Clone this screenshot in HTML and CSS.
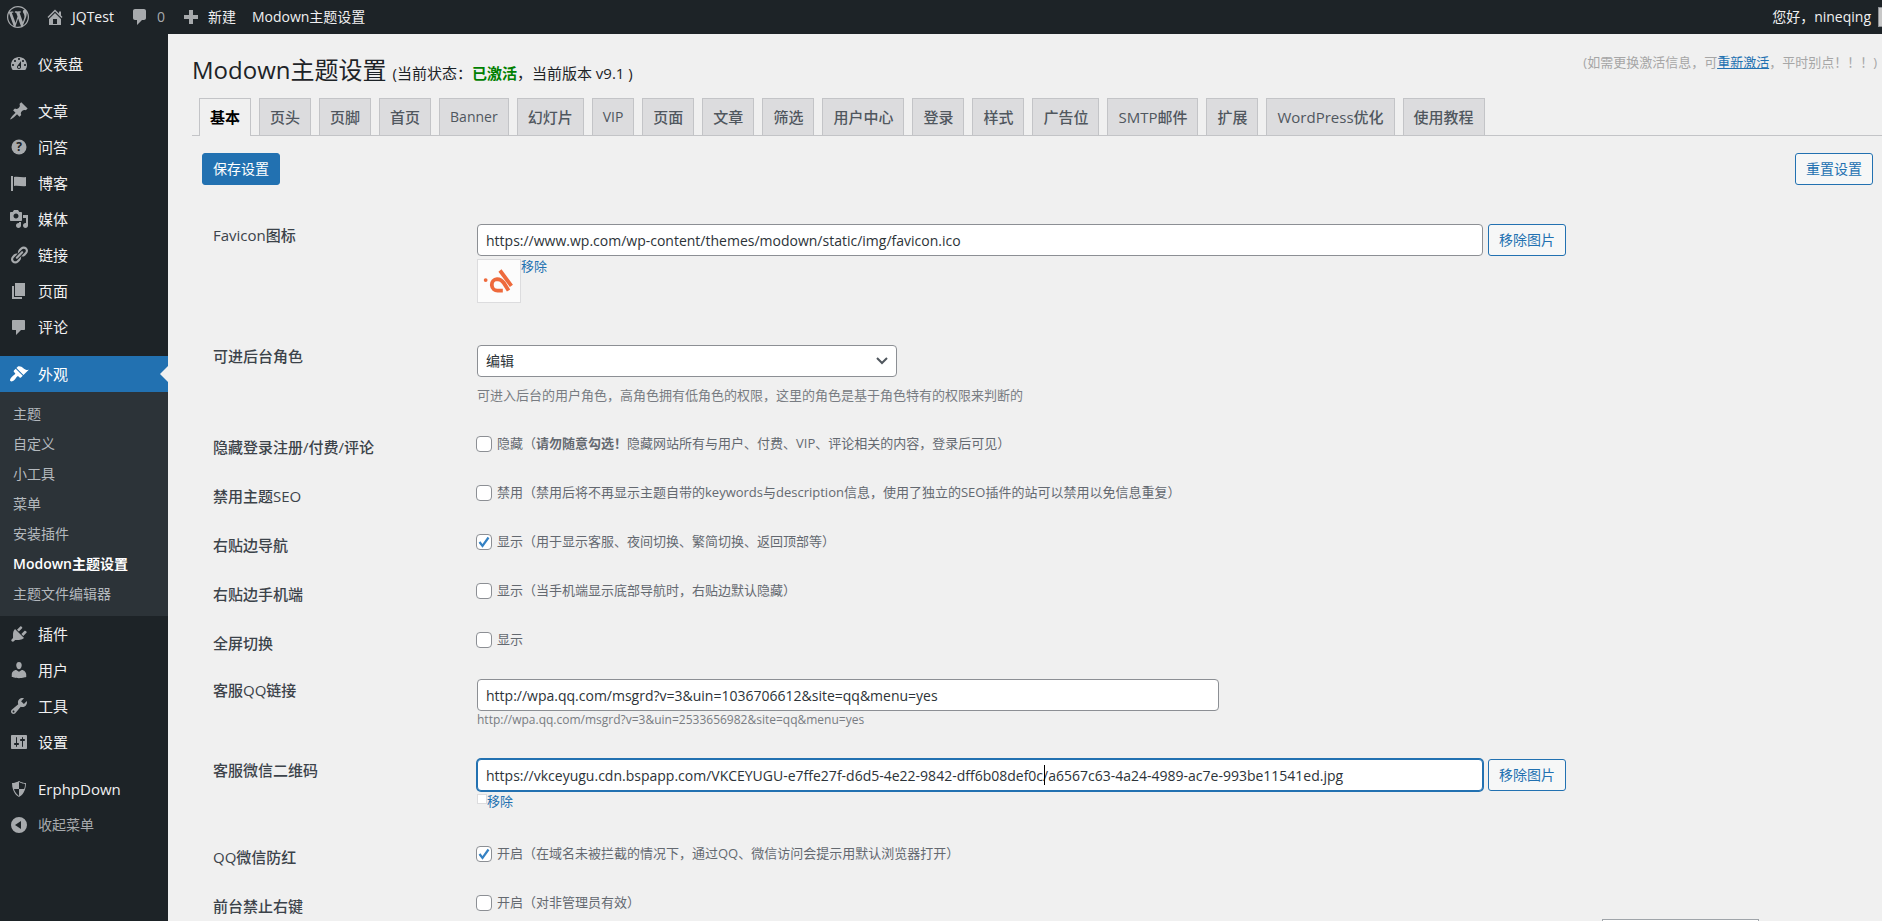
FILE: index.html
```html
<!DOCTYPE html>
<html lang="zh-CN">
<head>
<meta charset="utf-8">
<title>Modown主题设置</title>
<link rel="stylesheet" href="styles.css">
</head>
<body>
<header class="adminbar">
  <a class="bar-item bar-logo" href="#" aria-label="WordPress"><svg class="icon icon-wp" viewBox="0 0 20 20"><path d="M20 10c0-5.51-4.49-10-10-10C4.48 0 0 4.49 0 10c0 5.52 4.48 10 10 10 5.51 0 10-4.48 10-10zM7.78 15.37L4.37 6.22c.55-.02 1.17-.08 1.17-.08.5-.06.44-1.13-.06-1.11 0 0-1.45.11-2.37.11-.18 0-.37 0-.58-.01C4.12 2.69 6.87 1.11 10 1.11c2.33 0 4.45.87 6.05 2.34-.68-.11-1.65.39-1.65 1.58 0 .74.45 1.36.9 2.1.35.61.55 1.36.55 2.46 0 1.49-1.4 5-1.4 5l-3.03-8.37c.54-.02.82-.17.82-.17.5-.05.44-1.25-.06-1.22 0 0-1.44.12-2.38.12-.87 0-2.33-.12-2.33-.12-.5-.03-.56 1.2-.06 1.22l.92.08 1.26 3.41zM17.41 10c.24-.64.74-1.87.43-4.25.7 1.29 1.05 2.71 1.05 4.25 0 3.29-1.73 6.24-4.4 7.78.97-2.59 1.94-5.2 2.92-7.78zM6.1 18.09C3.12 16.65 1.11 13.53 1.11 10c0-1.3.23-2.48.72-3.59C3.25 10.3 4.67 14.2 6.1 18.09zm4.03-6.63l2.58 6.98c-.86.29-1.76.45-2.71.45-.79 0-1.57-.11-2.29-.33.81-2.38 1.62-4.74 2.42-7.1z"/></svg></a>
  <a class="bar-item bar-site" href="#"><svg class="icon" viewBox="0 0 20 20"><path fill-rule="evenodd" d="M16 8.5l1.53 1.53-1.06 1.06L10 4.6l-6.47 6.49-1.06-1.06L10 2.5l4 4v-2h2v4zm-6-2.46l6 5.99V18H4v-5.97zM12 17v-5H8v5h4z"/></svg>JQTest</a>
  <a class="bar-item bar-comments" href="#"><svg class="icon" viewBox="0 0 20 20"><path d="M5 2h9c1.1 0 2 .9 2 2v7c0 1.1-.9 2-2 2h-2l-5 5v-5H5c-1.1 0-2-.9-2-2V4c0-1.1.9-2 2-2z"/></svg>0</a>
  <a class="bar-item bar-new" href="#"><svg class="icon" viewBox="0 0 20 20"><path d="M8 3h4v5h5v4h-5v5H8v-5H3V8h5z"/></svg>新建</a>
  <a class="bar-item" href="#">Modown主题设置</a>
  <a class="bar-item bar-user" href="#">您好，nineqing<span class="avatar"></span></a>
</header>

<div class="layout">
  <nav class="sidebar" aria-label="主菜单">
    <ul class="menu">
      <li><a class="menu-link" href="#"><svg class="icon" viewBox="0 0 20 20"><path fill-rule="evenodd" d="M3.76 16h12.48c1.1-1.37 1.76-3.11 1.76-5 0-4.42-3.58-8-8-8s-8 3.58-8 8c0 1.89.66 3.63 1.76 5zM10 4c.55 0 1 .45 1 1s-.45 1-1 1-1-.45-1-1 .45-1 1-1zM6 6c.55 0 1 .45 1 1s-.45 1-1 1-1-.45-1-1 .45-1 1-1zm8 0c.55 0 1 .45 1 1s-.45 1-1 1-1-.45-1-1 .45-1 1-1zm-5.37 5.55L12 7v6c0 1.1-.9 2-2 2s-2-.9-2-2c0-.57.24-1.08.63-1.45zM4 10c.55 0 1 .45 1 1s-.45 1-1 1-1-.45-1-1 .45-1 1-1zm12 0c.55 0 1 .45 1 1s-.45 1-1 1-1-.45-1-1 .45-1 1-1zm-5 3c0-.55-.45-1-1-1s-1 .45-1 1 .45 1 1 1 1-.45 1-1z"/></svg>仪表盘</a></li>
    </ul>
    <ul class="menu">
      <li><a class="menu-link" href="#"><svg class="icon" viewBox="0 0 20 20"><path d="M10.44 3.02l1.82-1.82 6.36 6.35-1.83 1.82c-1.05-.68-2.48-.57-3.41.36l-.75.75c-.92.93-1.04 2.35-.35 3.41l-1.83 1.82-2.41-2.41-2.8 2.79c-.42.42-3.38 2.71-3.8 2.29s1.86-3.39 2.28-3.81l2.79-2.79L4.1 9.36l1.83-1.82c1.05.69 2.48.57 3.4-.36l.75-.75c.93-.92 1.05-2.35.36-3.41z"/></svg>文章</a></li>
      <li><a class="menu-link" href="#"><svg class="icon" viewBox="0 0 20 20"><circle cx="10" cy="10" r="7.5"/><text class="icon-mark" x="10" y="14" text-anchor="middle">?</text></svg>问答</a></li>
      <li><a class="menu-link" href="#"><svg class="icon" viewBox="0 0 20 20"><path d="M4 18V3H2v15h2zm1-5V4c4-1 8 1 12 0v9c-4 1-8-1-12 0z"/></svg>博客</a></li>
      <li><a class="menu-link" href="#"><svg class="icon" viewBox="0 0 20 20"><path fill-rule="evenodd" d="M13 11V4c0-.55-.45-1-1-1h-1.67L9 1H5L3.67 3H2c-.55 0-1 .45-1 1v7c0 .55.45 1 1 1h10c.55 0 1-.45 1-1zM7 4.5c1.38 0 2.5 1.12 2.5 2.5S8.38 9.5 7 9.5 4.5 8.38 4.5 7 5.62 4.5 7 4.5zM14 6h5v10.5c0 1.38-1.12 2.5-2.5 2.5S14 17.88 14 16.5s1.12-2.5 2.5-2.5c.17 0 .34.02.5.05V9h-3V6zm-4 8.05V13h2v3.5c0 1.38-1.12 2.5-2.5 2.5S7 17.88 7 16.5 8.12 14 9.5 14c.17 0 .34.02.5.05z"/></svg>媒体</a></li>
      <li><a class="menu-link" href="#"><svg class="icon" viewBox="0 0 20 20"><path d="M17.74 2.76c1.68 1.69 1.68 4.41 0 6.1l-1.53 1.52c-1.12 1.12-2.7 1.47-4.14 1.09l2.62-2.61.76-.77.76-.76c.84-.84.84-2.2 0-3.04-.84-.85-2.2-.85-3.04 0l-.77.76-3.38 3.38c-.37-1.44-.02-3.02 1.1-4.14l1.52-1.53c1.69-1.68 4.42-1.68 6.1 0zM8.59 13.43l5.34-5.34c.42-.42.42-1.1 0-1.52-.44-.43-1.13-.39-1.53 0l-5.33 5.34c-.42.42-.42 1.1 0 1.52.44.43 1.13.39 1.52 0zm-.76 2.29l4.14-4.15c.38 1.44.03 3.02-1.09 4.14l-1.52 1.53c-1.69 1.68-4.41 1.68-6.1 0-1.68-1.68-1.68-4.42 0-6.1l1.53-1.52c1.12-1.12 2.7-1.47 4.14-1.1l-4.14 4.15c-.85.84-.85 2.2 0 3.05.84.84 2.2.84 3.04 0z"/></svg>链接</a></li>
      <li><a class="menu-link" href="#"><svg class="icon" viewBox="0 0 20 20"><path d="M6 15V2h10v13H6zm-1 1h8v2H3V5h2v11z"/></svg>页面</a></li>
      <li><a class="menu-link" href="#"><svg class="icon" viewBox="0 0 20 20"><path d="M4 3h11c.6 0 1 .4 1 1v8c0 .6-.4 1-1 1h-3l-5 5v-5H4c-.6 0-1-.4-1-1V4c0-.6.4-1 1-1z"/></svg>评论</a></li>
    </ul>
    <ul class="menu">
      <li>
        <a class="menu-link menu-current" href="#"><svg class="icon" viewBox="0 0 20 20"><path d="M14.48 11.06L7.41 3.99l1.5-1.5c.5-.56 2.3-.47 3.51.32 1.21.8 1.43 1.28 2.91 2.1 1.18.64 2.45 1.26 4.45.85zm-.71.71L6.7 4.7 4.93 6.47c-.39.39-.39 1.02 0 1.41l1.06 1.06c.39.39.39 1.03 0 1.42-.6.6-1.43 1.11-2.21 1.69-.35.26-.7.53-1.01.84C1.43 14.23.4 16.08 1.4 17.07c.99 1 2.84-.03 4.18-1.36.31-.31.58-.66.85-1.02.57-.78 1.08-1.61 1.69-2.21.39-.39 1.02-.39 1.41 0l1.06 1.06c.39.39 1.02.39 1.41 0z"/></svg>外观</a>
        <ul class="submenu">
          <li><a href="#">主题</a></li>
          <li><a href="#">自定义</a></li>
          <li><a href="#">小工具</a></li>
          <li><a href="#">菜单</a></li>
          <li><a href="#">安装插件</a></li>
          <li><a class="submenu-current" href="#">Modown主题设置</a></li>
          <li><a href="#">主题文件编辑器</a></li>
        </ul>
      </li>
      <li><a class="menu-link" href="#"><svg class="icon" viewBox="0 0 20 20"><path d="M13.11 4.36L9.87 7.6 8 5.73l3.24-3.24c.35-.34 1.05-.2 1.56.32.52.51.66 1.21.31 1.55zm-8 1.77l.91-1.12 9.01 9.01-1.19.84c-.71.71-2.63 1.16-3.82 1.16H6.14L4.9 17.26c-.59.59-1.54.59-2.12 0-.59-.58-.59-1.53 0-2.12l1.24-1.24v-3.88c0-1.13.4-3.19 1.09-3.89zm7.26 3.97l3.24-3.24c.34-.35 1.04-.21 1.55.31.52.51.66 1.21.31 1.55l-3.24 3.25z"/></svg>插件</a></li>
      <li><a class="menu-link" href="#"><svg class="icon" viewBox="0 0 20 20"><path d="M10 9.25c-2.27 0-2.73-3.44-2.73-3.44C7 4.02 7.82 2 9.97 2c2.16 0 2.98 2.02 2.71 3.81 0 0-.41 3.44-2.68 3.44zm0 2.57L12.72 10c2.39 0 4.52 2.33 4.52 4.53v2.49s-3.65 1.13-7.24 1.13c-3.65 0-7.24-1.13-7.24-1.13v-2.49c0-2.25 1.94-4.48 4.47-4.48z"/></svg>用户</a></li>
      <li><a class="menu-link" href="#"><svg class="icon" viewBox="0 0 20 20"><path fill-rule="evenodd" d="M16.68 9.77c-1.34 1.34-3.3 1.67-4.95.99l-5.41 6.52c-.99.99-2.59.99-3.58 0s-.99-2.59 0-3.57l6.52-5.42c-.68-1.65-.35-3.61.99-4.95 1.28-1.28 3.12-1.62 4.72-1.06l-2.89 2.89 2.82 2.82 2.86-2.87c.53 1.58.18 3.39-1.08 4.65zM3.81 16.21c.4.39 1.04.39 1.43 0 .4-.4.4-1.04 0-1.43-.39-.4-1.03-.4-1.43 0-.39.39-.39 1.03 0 1.43z"/></svg>工具</a></li>
      <li><a class="menu-link" href="#"><svg class="icon" viewBox="0 0 20 20"><path fill-rule="evenodd" d="M18 16V4c0-.55-.45-1-1-1H3c-.55 0-1 .45-1 1v12c0 .55.45 1 1 1h14c.55 0 1-.45 1-1zM8 11h1c.55 0 1 .45 1 1s-.45 1-1 1H8v1.5c0 .28-.22.5-.5.5s-.5-.22-.5-.5V13H6c-.55 0-1-.45-1-1s.45-1 1-1h1V5.5c0-.28.22-.5.5-.5s.5.22.5.5V11zm5-2h-1c-.55 0-1-.45-1-1s.45-1 1-1h1V5.5c0-.28.22-.5.5-.5s.5.22.5.5V7h1c.55 0 1 .45 1 1s-.45 1-1 1h-1v5.5c0 .28-.22.5-.5.5s-.5-.22-.5-.5V9z"/></svg>设置</a></li>
    </ul>
    <ul class="menu">
      <li><a class="menu-link" href="#"><svg class="icon" viewBox="0 0 20 20"><path fill-rule="evenodd" d="M10 2s3 2 7 2c0 11-7 14-7 14S3 15 3 4c4 0 7-2 7-2zm0 8h5s1-1 1-5c0 0-5-1-6-2v7H5c1 4 5 7 5 7v-7z"/></svg>ErphpDown</a></li>
      <li><button class="menu-link menu-collapse" type="button"><svg class="icon" viewBox="0 0 20 20"><path fill-rule="evenodd" d="M10 2a8 8 0 1 1 0 16a8 8 0 0 1 0-16zM12 6v8l-6-4z"/></svg>收起菜单</button></li>
    </ul>
  </nav>

  <main class="content">
    <div class="page-head">
      <h1 class="page-title">Modown主题设置<small>(当前状态：<b class="ok">已激活</b>，当前版本 v9.1 )</small></h1>
      <p class="page-note">(如需更换激活信息，可<a href="#">重新激活</a>，平时别点！！！)</p>
    </div>

    <nav class="tabs" aria-label="设置分类">
      <a class="tab tab-active" href="#">基本</a>
      <a class="tab" href="#">页头</a>
      <a class="tab" href="#">页脚</a>
      <a class="tab" href="#">首页</a>
      <a class="tab tab-latin" href="#">Banner</a>
      <a class="tab" href="#">幻灯片</a>
      <a class="tab tab-latin" href="#">VIP</a>
      <a class="tab" href="#">页面</a>
      <a class="tab" href="#">文章</a>
      <a class="tab" href="#">筛选</a>
      <a class="tab" href="#">用户中心</a>
      <a class="tab" href="#">登录</a>
      <a class="tab" href="#">样式</a>
      <a class="tab" href="#">广告位</a>
      <a class="tab" href="#">SMTP邮件</a>
      <a class="tab" href="#">扩展</a>
      <a class="tab" href="#">WordPress优化</a>
      <a class="tab" href="#">使用教程</a>
    </nav>

    <form class="settings">
      <div class="actions">
        <button class="button button-primary" type="submit">保存设置</button>
        <button class="button" type="reset">重置设置</button>
      </div>

      <div class="rows">
        <div class="row">
          <label class="row-label" for="favicon">Favicon图标</label>
          <div class="field">
            <div class="upload">
              <input class="text" id="favicon" type="text" value="https://www.wp.com/wp-content/themes/modown/static/img/favicon.ico">
              <button class="button" type="button">移除图片</button>
            </div>
            <div class="preview">
              <svg class="thumb" viewBox="0 0 44 44" aria-hidden="true"><circle cx="8" cy="21" r="2"/><path class="thumb-line" d="M26 32h-5a6 6 0 0 1-1-12c3 0 5 1 7 4l5 8M23 11l12 16"/></svg>
              <a href="#">移除</a>
            </div>
          </div>
        </div>

        <div class="row">
          <label class="row-label" for="role">可进后台角色</label>
          <div class="field">
            <select class="text select" id="role"><option>编辑</option></select>
            <p class="hint hint-spaced">可进入后台的用户角色，高角色拥有低角色的权限，这里的角色是基于角色特有的权限来判断的</p>
          </div>
        </div>

        <div class="row row-check">
          <span class="row-label">隐藏登录注册/付费/评论</span>
          <label class="check"><input type="checkbox"><span>隐藏（<b>请勿随意勾选！</b>隐藏网站所有与用户、付费、VIP、评论相关的内容，登录后可见）</span></label>
        </div>
        <div class="row row-check">
          <span class="row-label">禁用主题SEO</span>
          <label class="check"><input type="checkbox"><span>禁用（禁用后将不再显示主题自带的keywords与description信息，使用了独立的SEO插件的站可以禁用以免信息重复）</span></label>
        </div>
        <div class="row row-check">
          <span class="row-label">右贴边导航</span>
          <label class="check"><input type="checkbox" checked><span>显示（用于显示客服、夜间切换、繁简切换、返回顶部等）</span></label>
        </div>
        <div class="row row-check">
          <span class="row-label">右贴边手机端</span>
          <label class="check"><input type="checkbox"><span>显示（当手机端显示底部导航时，右贴边默认隐藏）</span></label>
        </div>
        <div class="row row-check">
          <span class="row-label">全屏切换</span>
          <label class="check"><input type="checkbox"><span>显示</span></label>
        </div>

        <div class="row">
          <label class="row-label" for="qq">客服QQ链接</label>
          <div class="field">
            <input class="text text-medium" id="qq" type="text" value="http://wpa.qq.com/msgrd?v=3&amp;uin=1036706612&amp;site=qq&amp;menu=yes">
            <p class="hint hint-url">http://wpa.qq.com/msgrd?v=3&amp;uin=2533656982&amp;site=qq&amp;menu=yes</p>
          </div>
        </div>

        <div class="row">
          <label class="row-label" for="wechat">客服微信二维码</label>
          <div class="field">
            <div class="upload">
              <input class="text text-focused" id="wechat" type="text" value="https://vkceyugu.cdn.bspapp.com/VKCEYUGU-e7ffe27f-d6d5-4e22-9842-dff6b08def0c/a6567c63-4a24-4989-ac7e-993be11541ed.jpg">
              <span class="caret"></span>
              <button class="button" type="button">移除图片</button>
            </div>
            <div class="preview">
              <span class="thumb-empty"></span>
              <a href="#">移除</a>
            </div>
          </div>
        </div>

        <div class="row row-check">
          <span class="row-label">QQ微信防红</span>
          <label class="check"><input type="checkbox" checked><span>开启（在域名未被拦截的情况下，通过QQ、微信访问会提示用默认浏览器打开）</span></label>
        </div>
        <div class="row row-check">
          <span class="row-label">前台禁止右键</span>
          <label class="check"><input type="checkbox"><span>开启（对非管理员有效）</span></label>
        </div>
      </div>
    </form>
  </main>
</div>
<div class="popup-edge"></div>
</body>
</html>
```

FILE: styles.css
```css
* { box-sizing: border-box; }

html, body { height: 100%; }

body {
  display: flex;
  flex-direction: column;
  margin: 0;
  overflow: hidden;
  background: #f0f0f0;
  color: #3c434a;
  font: 14px/20px "Open Sans", "Noto Sans CJK SC", sans-serif;
}

button, input, select { font: inherit; }
a { color: #2271b1; text-decoration: none; }
ul { margin: 0; padding: 0; list-style: none; }
p { margin: 0; }

.icon { flex: none; width: 20px; height: 20px; fill: #a7aaad; }
.icon-wp { width: 22px; height: 22px; }
.icon-mark { fill: #1d2327; font-size: 12px; font-weight: 700; }

/* Top bar */
.adminbar {
  display: flex;
  flex: none;
  align-items: center;
  gap: 16px;
  height: 34px;
  padding-left: 7px;
  background: #1d2327;
}
.bar-item {
  display: flex;
  align-items: center;
  gap: 7px;
  color: #f0f0f1;
  white-space: nowrap;
}
.bar-comments { color: #a7aaad; }
.bar-user { margin-left: auto; }
.avatar { width: 4px; height: 20px; border: 1px solid #8c8f94; border-right: 0; background: #c8c8c8; }

/* Side menu */
.layout { display: flex; flex: 1; min-height: 0; }
.sidebar {
  display: flex;
  flex: none;
  flex-direction: column;
  gap: 11px;
  width: 168px;
  padding-top: 12px;
  background: #1d2327;
}
.menu-link {
  position: relative;
  display: flex;
  align-items: center;
  gap: 9px;
  width: 100%;
  height: 36px;
  padding: 0 9px;
  border: 0;
  background: none;
  color: #f0f0f1;
  font-size: 15px;
}
.menu-current { background: #2271b1; color: #fff; }
.menu-current .icon { fill: #fff; }
.menu-current::after {
  content: "";
  position: absolute;
  top: 10px;
  right: 0;
  border: 8px solid transparent;
  border-left: 0;
  border-right-color: #f0f0f0;
}
.menu-collapse { color: #a7aaad; font-size: 14px; }
.submenu { padding: 7px 0; background: #2c3338; }
.submenu a { display: block; padding: 0 13px; color: #b4b9be; line-height: 30px; }
.submenu .submenu-current { color: #fff; font-weight: 600; }

/* Page heading */
.content { flex: 1; min-width: 0; padding: 19px 0 0 24px; }
.page-head {
  display: flex;
  align-items: flex-start;
  justify-content: space-between;
  padding-right: 5px;
}
.page-title {
  margin: 0;
  color: #1d2327;
  font-size: 24px;
  font-weight: 400;
  line-height: 34px;
}
.page-title small { margin-left: 6px; font-size: 15px; }
.ok { color: #008000; }
.page-note { color: #a6a6a6; font-size: 13px; line-height: 18px; }
.page-note a { text-decoration: underline; }

/* Tabs */
.tabs {
  display: flex;
  gap: 8px;
  margin-top: 8px;
  padding-left: 7px;
  border-bottom: 1px solid #c3c4c7;
}
.tab {
  padding: 0 10px;
  border: 1px solid #c3c4c7;
  border-bottom: 0;
  background: #dcdcde;
  color: #50575e;
  font-size: 15px;
  font-weight: 500;
  line-height: 36px;
  white-space: nowrap;
}
.tab-latin { font-size: 14px; }
.tab-active {
  margin-bottom: -1px;
  padding-bottom: 1px;
  background: #f0f0f0;
  color: #000;
  font-weight: 600;
}

/* Form */
.actions {
  display: flex;
  justify-content: space-between;
  padding: 17px 9px 39px 10px;
}
.button {
  flex: none;
  height: 32px;
  padding: 0 10px;
  border: 1px solid #2271b1;
  border-radius: 3px;
  background: #f6f7f7;
  color: #2271b1;
}
.button-primary { background: #2271b1; color: #fff; }

.rows { display: flex; flex-direction: column; gap: 25px; padding-left: 21px; }
.row { display: grid; grid-template-columns: 263px minmax(0, 1fr); align-items: start; padding-bottom: 5px; }
.row-check { padding-bottom: 0; }
.row-label { font-size: 15px; font-weight: 500; line-height: 22px; }
.row-check .row-label { padding-top: 2px; }
.field { display: flex; flex-direction: column; padding-left: 1px; }

.text {
  width: 100%;
  height: 32px;
  padding: 0 8px;
  border: 1px solid #8c8f94;
  border-radius: 4px;
  background: #fff;
  color: #2c3338;
}
.text-medium { max-width: 742px; }
.text-focused { border-color: #2271b1; box-shadow: 0 0 0 1px #2271b1; }
.select {
  max-width: 420px;
  appearance: none;
  background: #fff url("data:image/svg+xml,%3Csvg xmlns='http://www.w3.org/2000/svg' viewBox='0 0 16 16'%3E%3Cpath d='M3 5l5 5 5-5' fill='none' stroke='%2350575e' stroke-width='2'/%3E%3C/svg%3E") no-repeat right 6px center / 16px 16px;
}
.upload { position: relative; display: flex; gap: 5px; max-width: 1089px; }
.caret { position: absolute; top: 6px; left: 567px; width: 1px; height: 20px; background: #000; }

.preview { display: flex; align-items: flex-start; margin-top: 1px; padding-bottom: 4px; font-size: 13px; line-height: 18px; }
.thumb {
  width: 44px;
  height: 44px;
  margin: 2px 0 8px;
  border: 1px solid #dcdcde;
  background: #fcfcfc;
  fill: #ee6a3c;
}
.thumb-line { fill: none; stroke: #ee6a3c; stroke-width: 4; }
.thumb-empty { width: 10px; height: 10px; margin-top: 2px; border: 1px solid #dcdcde; background: #fff; }

.hint { color: #787c82; font-size: 13px; line-height: 18px; }
.hint-spaced { margin-top: 9px; }
.hint-url { font-size: 12px; }

.check {
  display: flex;
  align-items: flex-start;
  gap: 5px;
  color: #646970;
  font-size: 13px;
  line-height: 19px;
}
.check input {
  flex: none;
  appearance: none;
  width: 16px;
  height: 16px;
  margin: 2px 0 0;
  border: 1px solid #8c8f94;
  border-radius: 4px;
  background: #fff;
}
.check input:checked {
  background: #fff url("data:image/svg+xml,%3Csvg xmlns='http://www.w3.org/2000/svg' viewBox='0 0 14 14'%3E%3Cpath d='M2.500 7l3 4 6-8.500' fill='none' stroke='%233582c4' stroke-width='2.200'/%3E%3C/svg%3E") center / 14px 14px no-repeat;
}

/* Top edge of the suggestion list rising from the window's bottom */
.popup-edge {
  position: fixed;
  right: 123px;
  bottom: 0;
  width: 157px;
  height: 2px;
  border: 1px solid #a0a5aa;
  border-bottom: 0;
  background: #fff;
}
```
